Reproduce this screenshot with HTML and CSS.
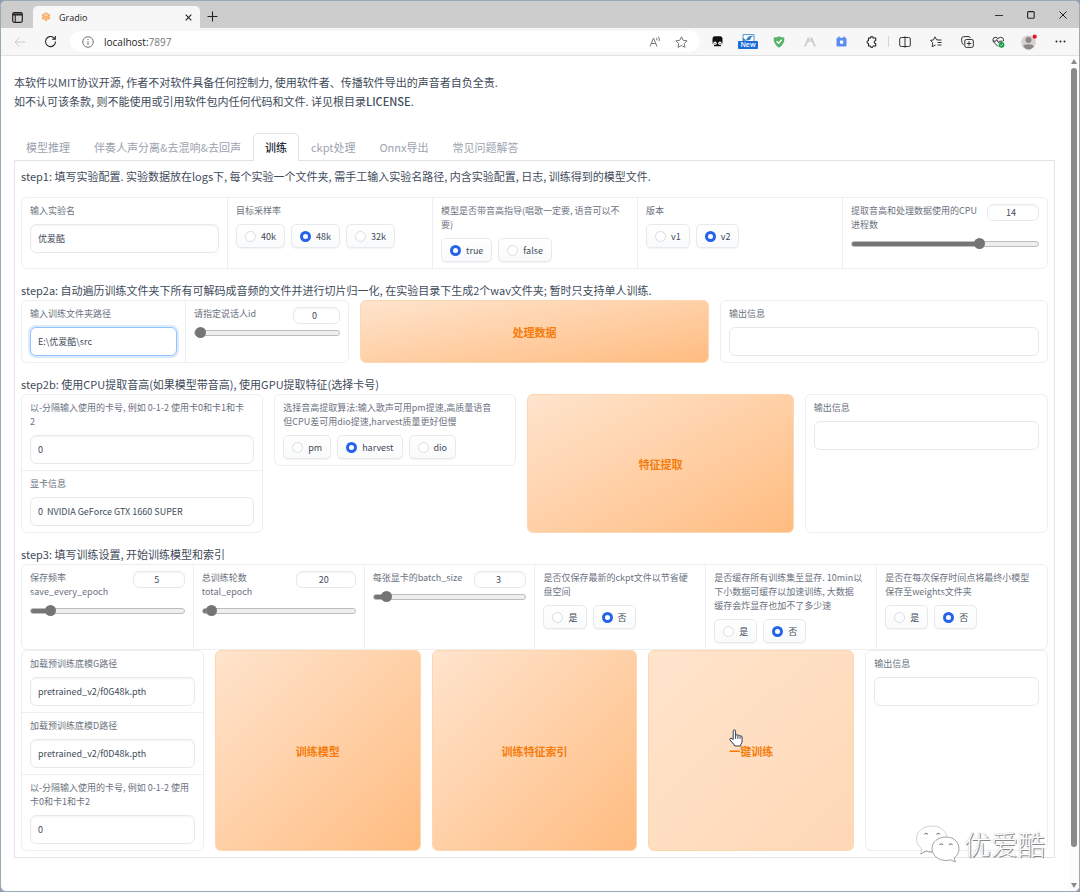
FILE: index.html
```html
<!DOCTYPE html>
<html lang="zh-CN">
<head>
<meta charset="utf-8">
<meta name="viewport" content="width=device-width, initial-scale=1">
<title>Gradio</title>
<link rel="stylesheet" href="styles.css">
</head>
<body>
<div class="window">
  <header class="titlebar">
    <button class="icon-btn workspace" aria-label="标签页操作"><svg width="11" height="11" viewBox="0 0 11 11"><rect x=".7" y=".7" width="9.6" height="9.6" rx="1.5" fill="none" stroke="#222" stroke-width="1.2"/><path d="M1 1.5h9v2H1z" fill="#222"/><path d="M3.3 3v7" stroke="#222"/></svg></button>
    <div class="browser-tab">
      <svg width="10" height="10" viewBox="0 0 10 10"><path d="M5 .8 9 3v4L5 9.2 1 7V3z" fill="#fbd1a2"/><path d="m1 3 4 2.2L9 3M1 5l4 2.2L9 5M1 7l2-1.2M9 7 7 5.8M5 .8 1 3m4-2.2L9 3M5 9.2V7" fill="none" stroke="#f39a45" stroke-width=".8"/></svg>
      <span class="browser-tab-title">Gradio</span>
      <button class="icon-btn" aria-label="关闭标签页"><svg width="7" height="7" viewBox="0 0 7 7"><path d="M.7.7l5.6 5.6M6.3.7L.7 6.300" stroke="#222" stroke-width="1.1"/></svg></button>
    </div>
    <button class="icon-btn new-tab" aria-label="新建标签页"><svg width="11" height="11" viewBox="0 0 11 11"><path d="M5.500 0.500v10M.5 5.500h10" stroke="#222" stroke-width="1.100"/></svg></button>
    <div class="window-controls">
      <button class="icon-btn" aria-label="最小化"><svg width="8" height="8" viewBox="0 0 8 8"><path d="M0 4.500h8" stroke="#333"/></svg></button>
      <button class="icon-btn" aria-label="最大化"><svg width="8" height="8" viewBox="0 0 8 8"><rect x=".6" y=".6" width="6.600" height="6.600" rx="1" fill="none" stroke="#222" stroke-width="1.100"/></svg></button>
      <button class="icon-btn" aria-label="关闭"><svg width="8" height="8" viewBox="0 0 8 8"><path d="m.5.5 7 7m0-7-7 7" stroke="#222" stroke-width="1"/></svg></button>
    </div>
  </header>

  <nav class="toolbar" aria-label="浏览器工具栏">
    <button class="icon-btn nav-btn" aria-label="返回"><svg width="12" height="10" viewBox="0 0 12 10"><path d="M11.500 5H1m4.500-4.500L1 5l4.500 4.500" fill="none" stroke="#ccc"/></svg></button>
    <button class="icon-btn nav-btn" aria-label="刷新"><svg width="13" height="13" viewBox="0 0 13 13"><path d="M11.500 6.500a5 5 0 1 1-1.700-3.700l1.200 1.200M11.300 1v3.200H8.100" fill="none" stroke="#222" stroke-width="1.100"/></svg></button>
    <div class="address">
      <svg width="12" height="12" viewBox="0 0 12 12"><circle cx="6" cy="6" r="5.300" fill="none" stroke="#777"/><path d="M6 5.300v3.400" stroke="#777" stroke-width="1.100"/><circle cx="6" cy="3.600" r=".7" fill="#777"/></svg>
      <span class="url">localhost:<span class="port">7897</span></span>
      <button class="icon-btn addr-btn" aria-label="大声朗读"><svg width="12" height="12" viewBox="0 0 12 12"><path d="M1 10.500 4.500 2 8 10.500M2.200 7.500h4.600M7.200 1.800q1 1 .7 2.600M9.300.6q1.600 1.800.9 4.400" fill="none" stroke="#777"/></svg></button>
      <button class="icon-btn addr-btn" aria-label="收藏"><svg width="13" height="12" viewBox="0 0 13 12"><path d="m6.500.8 1.700 3.500 3.900.5-2.800 2.700.7 3.800-3.500-1.800L3 11.300l.7-3.800L.9 4.800l3.900-.5z" fill="none" stroke="#777" stroke-linejoin="round"/></svg></button>
    </div>
    <div class="extensions">
      <button class="icon-btn" aria-label="脚本管理器"><svg width="11" height="11" viewBox="0 0 11 11"><path d="M2.500.3h6q2 0 2 2.500v4q0 1.700-1.500 1.700v1.700H2V8.500Q.5 8.500.5 6.800v-4Q.5.3 2.500.3z" fill="#111"/><circle cx="3" cy="7.300" r="1.700" fill="#fff"/><circle cx="8" cy="7.300" r="1.700" fill="#fff"/><circle cx="3" cy="7.500" r=".6" fill="#111"/><circle cx="8" cy="7.500" r=".6" fill="#111"/></svg></button>
      <button class="icon-btn ext-new" aria-label="新扩展"><svg width="13" height="7" viewBox="0 0 13 7"><path d="M1 7V.6h11V7" fill="#fff" stroke="#4e93d1"/><path d="M1 7V4l3 2 2-3q3-2 6-1-3 0-4 4z" fill="#347fc0"/></svg><span class="ext-badge">New</span></button>
      <button class="icon-btn" aria-label="安全防护"><svg width="12" height="12" viewBox="0 0 12 12"><path d="M.7 1.500Q4 1.500 6 .3q2 1.200 5.300 1.200Q12 8 6 11.700 0 8 .7 1.500z" fill="#56b368"/><path d="m3.500 5.300 2 2 3.300-3.500" fill="none" stroke="#fff" stroke-width="1.300"/></svg></button>
      <button class="icon-btn" aria-label="扩展"><svg width="12" height="10" viewBox="0 0 12 10"><path d="M1 9.500 4.600.8V5M11 9.500 7.400.8V5" fill="none" stroke="#ccc" stroke-width="1.800"/></svg></button>
      <button class="icon-btn" aria-label="视频扩展"><svg width="11" height="11" viewBox="0 0 11 11"><rect x=".5" y="1.800" width="10" height="8.700" rx="1" fill="#5b8df0"/><path d="M3 .5v2M8 .5v2" stroke="#5b8df0" stroke-width="1.500"/><rect x="4" y="4.500" width="3.200" height="3.200" rx=".8" fill="#fff"/></svg></button>
      <button class="icon-btn" aria-label="扩展管理"><svg width="12" height="12" viewBox="0 0 12 12"><path d="M2.500 2h2q0-1.400 1.300-1.400T7.100 2h2.600v2.500q-1.500.2-1.500 1.500t1.500 1.500V10H7.100q0 1.400-1.300 1.400T4.500 10h-2V7.500Q1 7.300 1 6t1.500-1.500z" fill="none" stroke="#222" stroke-width="1.100" stroke-linejoin="round"/></svg></button>
      <span class="tool-divider"></span>
      <button class="icon-btn" aria-label="分屏"><svg width="12" height="12" viewBox="0 0 12 12"><path d="M4.500 1.500h-2Q.7 1.500.7 3v6q0 1.500 1.800 1.500h2M7.500 1.500h2q1.800 0 1.800 1.500v6q0 1.500-1.800 1.500h-2M6 .3v11.400M4 1.500h4M4 10.500h4" fill="none" stroke="#333"/></svg></button>
      <button class="icon-btn" aria-label="收藏夹"><svg width="12" height="12" viewBox="0 0 12 12"><path d="M7.800 3.800H6.600L5 .9 3.500 3.900l-3 .5L2.700 6.700 2.200 10.700 5.500 9M7.500 4h4M7.500 6.500h4M7.500 9h4" fill="none" stroke="#333" stroke-linejoin="round"/></svg></button>
      <button class="icon-btn" aria-label="集锦"><svg width="13" height="12" viewBox="0 0 13 12"><rect x="3.800" y="3.500" width="8.500" height="7.900" rx="1.500" fill="none" stroke="#333"/><path d="M2.800 8.500Q1 8 .9 6.500L.6 3Q.5.8 2.500.7L7 .5q2 0 2.300 1.600M8 5.200V9.700M5.800 7.500h4.500" fill="none" stroke="#333"/></svg></button>
      <button class="icon-btn" aria-label="浏览器概要"><svg width="13" height="12" viewBox="0 0 13 12"><path d="M6 10.500 1.700 6Q0 3.700 1.700 1.900 4 .3 6 2.500 8.500.2 10.800 2q1.200 1.500.5 3.300M.8 5.200h3l1-1.700 1.700 3.300 1-1.600h3" fill="none" stroke="#333"/><circle cx="9.500" cy="8.800" r="2.900" fill="#159947"/><path d="m8.200 8.800 1 1 1.700-1.800" fill="none" stroke="#fff" stroke-width=".8"/></svg></button>
      <button class="icon-btn" aria-label="个人资料"><svg width="17" height="16" viewBox="0 0 17 16"><circle cx="7.500" cy="8.500" r="7.300" fill="#d6d2cf"/><circle cx="7.500" cy="6" r="3" fill="#8b8785"/><path d="M2.300 12.500Q3 10.300 7.500 10.300t5.200 2.200Q10.500 15.500 7.500 15.500T2.300 12.500z" fill="#8b8785"/><circle cx="13.700" cy="2.700" r="2.100" fill="#e81123"/></svg></button>
      <button class="icon-btn" aria-label="设置及其他"><svg width="11" height="3" viewBox="0 0 11 3"><circle cx="1.500" cy="1.500" r="1" fill="#222"/><circle cx="5.500" cy="1.500" r="1" fill="#222"/><circle cx="9.500" cy="1.500" r="1" fill="#222"/></svg></button>
    </div>
  </nav>

  <div class="viewport">
    <main class="page">
      <div class="intro">
        <p>本软件以MIT协议开源, 作者不对软件具备任何控制力, 使用软件者、传播软件导出的声音者自负全责.</p>
        <p>如不认可该条款, 则不能使用或引用软件包内任何代码和文件. 详见根目录<strong>LICENSE</strong>.</p>
      </div>

      <div class="tabs" role="tablist">
        <button class="tab" role="tab">模型推理</button>
        <button class="tab" role="tab">伴奏人声分离&amp;去混响&amp;去回声</button>
        <button class="tab selected" role="tab" aria-selected="true">训练</button>
        <button class="tab" role="tab">ckpt处理</button>
        <button class="tab" role="tab">Onnx导出</button>
        <button class="tab" role="tab">常见问题解答</button>
      </div>

      <div class="panel" role="tabpanel">
        <section class="step step-first">
          <p class="step-title">step1: 填写实验配置. 实验数据放在logs下, 每个实验一个文件夹, 需手工输入实验名路径, 内含实验配置, 日志, 训练得到的模型文件.</p>
          <div class="group cols">
            <div class="cell">
              <label class="label" for="exp">输入实验名</label>
              <input class="text" id="exp" type="text" value="优爱酷">
            </div>
            <div class="cell">
              <fieldset><legend class="label">目标采样率</legend>
                <div class="chips">
                  <label class="chip"><input type="radio" name="sr">40k</label>
                  <label class="chip"><input type="radio" name="sr" checked>48k</label>
                  <label class="chip"><input type="radio" name="sr">32k</label>
                </div>
              </fieldset>
            </div>
            <div class="cell">
              <fieldset><legend class="label">模型是否带音高指导(唱歌一定要, 语音可以不<br>要)</legend>
                <div class="chips">
                  <label class="chip"><input type="radio" name="f0" checked>true</label>
                  <label class="chip"><input type="radio" name="f0">false</label>
                </div>
              </fieldset>
            </div>
            <div class="cell">
              <fieldset><legend class="label">版本</legend>
                <div class="chips">
                  <label class="chip"><input type="radio" name="ver">v1</label>
                  <label class="chip"><input type="radio" name="ver" checked>v2</label>
                </div>
              </fieldset>
            </div>
            <div class="cell">
              <div class="slider-head">
                <label class="label" for="cpu">提取音高和处理数据使用的CPU<br>进程数</label>
                <input class="number" type="number" value="14" aria-label="进程数">
              </div>
              <input class="slider" id="cpu" type="range" min="0" max="20" value="14" style="--fill:70%">
            </div>
          </div>
        </section>

        <section class="step">
          <p class="step-title">step2a: 自动遍历训练文件夹下所有可解码成音频的文件并进行切片归一化, 在实验目录下生成2个wav文件夹; 暂时只支持单人训练.</p>
          <div class="row row-three">
            <div class="group cols">
              <div class="cell">
                <label class="label" for="dir">输入训练文件夹路径</label>
                <input class="text focused" id="dir" type="text" value="E:\优爱酷\src">
              </div>
              <div class="cell">
                <div class="slider-head">
                  <label class="label" for="spk">请指定说话人id</label>
                  <input class="number narrow" type="number" value="0" aria-label="说话人id">
                </div>
                <input class="slider" id="spk" type="range" min="0" max="4" value="0" style="--fill:0%">
              </div>
            </div>
            <button class="primary">处理数据</button>
            <div class="group">
              <div class="cell">
                <label class="label" for="out1">输出信息</label>
                <input class="text" id="out1" type="text" readonly>
              </div>
            </div>
          </div>
        </section>

        <section class="step">
          <p class="step-title">step2b: 使用CPU提取音高(如果模型带音高), 使用GPU提取特征(选择卡号)</p>
          <div class="row row-four">
            <div class="group">
              <div class="cell">
                <label class="label" for="gpu">以-分隔输入使用的卡号, 例如 0-1-2 使用卡0和卡1和卡<br>2</label>
                <input class="text" id="gpu" type="text" value="0">
              </div>
              <div class="cell">
                <label class="label" for="gpuinfo">显卡信息</label>
                <input class="text" id="gpuinfo" type="text" value="0  NVIDIA GeForce GTX 1660 SUPER" readonly>
              </div>
            </div>
            <div class="group hug">
              <div class="cell">
                <fieldset><legend class="label">选择音高提取算法:输入歌声可用pm提速,高质量语音<br>但CPU差可用dio提速,harvest质量更好但慢</legend>
                  <div class="chips">
                    <label class="chip"><input type="radio" name="alg">pm</label>
                    <label class="chip"><input type="radio" name="alg" checked>harvest</label>
                    <label class="chip"><input type="radio" name="alg">dio</label>
                  </div>
                </fieldset>
              </div>
            </div>
            <button class="primary">特征提取</button>
            <div class="group">
              <div class="cell">
                <label class="label" for="out2">输出信息</label>
                <input class="text" id="out2" type="text" readonly>
              </div>
            </div>
          </div>
        </section>

        <section class="step">
          <p class="step-title">step3: 填写训练设置, 开始训练模型和索引</p>
          <div class="group cols">
            <div class="cell">
              <div class="slider-head">
                <label class="label" for="save">保存频率<br>save_every_epoch</label>
                <input class="number" type="number" value="5" aria-label="保存频率">
              </div>
              <input class="slider" id="save" type="range" min="0" max="50" value="5" style="--fill:10%">
            </div>
            <div class="cell">
              <div class="slider-head">
                <label class="label" for="total">总训练轮数<br>total_epoch</label>
                <input class="number wide" type="number" value="20" aria-label="总训练轮数">
              </div>
              <input class="slider" id="total" type="range" min="0" max="1000" value="20" style="--fill:2%">
            </div>
            <div class="cell">
              <div class="slider-head">
                <label class="label" for="batch">每张显卡的batch_size</label>
                <input class="number" type="number" value="3" aria-label="batch_size">
              </div>
              <input class="slider" id="batch" type="range" min="1" max="40" value="3" style="--fill:5%">
            </div>
            <div class="cell">
              <fieldset><legend class="label">是否仅保存最新的ckpt文件以节省硬<br>盘空间</legend>
                <div class="chips">
                  <label class="chip"><input type="radio" name="latest">是</label>
                  <label class="chip"><input type="radio" name="latest" checked>否</label>
                </div>
              </fieldset>
            </div>
            <div class="cell">
              <fieldset><legend class="label">是否缓存所有训练集至显存. 10min以<br>下小数据可缓存以加速训练, 大数据<br>缓存会炸显存也加不了多少速</legend>
                <div class="chips">
                  <label class="chip"><input type="radio" name="cache">是</label>
                  <label class="chip"><input type="radio" name="cache" checked>否</label>
                </div>
              </fieldset>
            </div>
            <div class="cell">
              <fieldset><legend class="label">是否在每次保存时间点将最终小模型<br>保存至weights文件夹</legend>
                <div class="chips">
                  <label class="chip"><input type="radio" name="weights">是</label>
                  <label class="chip"><input type="radio" name="weights" checked>否</label>
                </div>
              </fieldset>
            </div>
          </div>
          <div class="row row-five">
            <div class="group">
              <div class="cell">
                <label class="label" for="pg">加载预训练底模G路径</label>
                <input class="text" id="pg" type="text" value="pretrained_v2/f0G48k.pth">
              </div>
              <div class="cell">
                <label class="label" for="pd">加载预训练底模D路径</label>
                <input class="text" id="pd" type="text" value="pretrained_v2/f0D48k.pth">
              </div>
              <div class="cell">
                <label class="label" for="gpu2">以-分隔输入使用的卡号, 例如 0-1-2 使用<br>卡0和卡1和卡2</label>
                <input class="text" id="gpu2" type="text" value="0">
              </div>
            </div>
            <button class="primary">训练模型</button>
            <button class="primary">训练特征索引</button>
            <button class="primary hovered">一键训练
              <svg class="pointer" width="14" height="18" viewBox="0 0 14 18"><path d="M4.200 10.500V2.200Q4.200.8 5.400.8t1.200 1.400v4.500q.2-1 1.100-1t1.200 1.100q.3-.8 1.100-.7t1.100 1.200q.3-.6 1-.5t1 1.200v4q0 2-1.200 3.200L11.500 17H5.800L4.500 15 1 11q-.6-1 .2-1.600t1.900.3z" fill="#fff" stroke="#333a48" stroke-width="1" stroke-linejoin="round"/><path d="M6.600 6.500v3.300M8.900 7v2.800M11.100 7.500v2.300" stroke="#333a48"/></svg>
            </button>
            <div class="group">
              <div class="cell">
                <label class="label" for="out3">输出信息</label>
                <input class="text" id="out3" type="text" readonly>
              </div>
            </div>
          </div>
        </section>
      </div>
    </main>
    <div class="scrollbar" aria-hidden="true">
      <span class="arrow-up"></span>
      <span class="thumb"></span>
      <span class="arrow-down"></span>
    </div>
  </div>

  <div class="watermark">
    <svg width="46" height="38" viewBox="0 0 46 38"><g fill="#fff" stroke="#999" stroke-width=".9" stroke-linejoin="round"><path d="M17 1C8 1 1.500 6.500 1.500 14c0 4 2 7.500 5.500 10l-1.500 5 5.500-3q3 1 6 1c8.500 0 15-5.500 15-13S25.500 1 17 1z" stroke="#ccc"/><path d="m5.500 29 5.500-3q3 1 6 1" fill="none"/><path d="M31 12c-8 0-14 5-14 11.500S23 35.500 31 35.500q2.500 0 4.500-.7l5 2.200-1.300-4q4.800-3.500 4.800-9.500C44 17 38.500 12 31 12z"/></g><g fill="none" stroke="#777" stroke-width="1.200"><path d="M9.500 9.500q1.700-2.500 3.500 0M21.500 9.500q1.700-2.500 3.500 0M24.500 20q1.700-2.500 3.500 0M34 20q1.700-2.500 3.500 0"/></g></svg>
    <span>优爱酷</span>
  </div>
</div>
</body>
</html>
```
FILE: styles.css
```css
* { box-sizing: border-box; }

body {
  margin: 0;
  background: #8d9cb0;
  font-family: "Noto Sans CJK SC", sans-serif;
  font-size: 11px;
  color: #414b5a;
}

button, input { font: inherit; color: inherit; }
p { margin: 0; }
svg { display: block; flex: none; }

.window {
  position: relative;
  display: flex;
  flex-direction: column;
  min-height: 100vh;
  border: 1px solid #9aa9b6;
  border-radius: 6px;
  overflow: hidden;
  background: #fff;
}

/* Browser chrome */

.icon-btn {
  display: flex;
  align-items: center;
  justify-content: center;
  padding: 0;
  border: 0;
  background: none;
}

.titlebar {
  display: flex;
  align-items: stretch;
  height: 27px;
  background: #cdcdcd;
}

.workspace { width: 32px; padding-top: 5px; }

.browser-tab {
  display: flex;
  align-items: center;
  gap: 8px;
  width: 167px;
  margin-top: 5px;
  padding: 0 8px;
  border-radius: 5px 5px 0 0;
  background: #f7f7f7;
  font-family: "Open Sans", sans-serif;
  font-size: 9px;
  color: #222;
}

.browser-tab-title { flex: 1; }

.new-tab { width: 24px; padding-top: 4px; }

.window-controls { display: flex; margin-left: auto; }
.window-controls .icon-btn { width: 32px; }

.toolbar {
  display: flex;
  align-items: center;
  height: 28px;
  padding: 0 4px;
  border-bottom: 1px solid #e2e2e2;
  background: #f7f7f7;
}

.nav-btn { width: 30px; }

.address {
  display: flex;
  flex: 1;
  align-items: center;
  gap: 10px;
  height: 21px;
  margin: 0 2px 0 5px;
  padding: 0 10px 0 12px;
  border-radius: 11px;
  background: #fff;
}

.url {
  flex: 1;
  font-family: "Open Sans", sans-serif;
  font-size: 10px;
  color: #222;
}

.port { color: #777; }
.addr-btn { width: 17px; }

.extensions { display: flex; align-items: center; gap: 1px; }
.extensions .icon-btn { width: 30px; height: 20px; }

.tool-divider { width: 1px; height: 11px; background: #d5d5d5; }

.extensions .ext-new { flex-direction: column; }

.ext-badge {
  padding: 0 2px;
  border-radius: 1px;
  background: #1a6bd8;
  color: #fff;
  font-family: "Open Sans", sans-serif;
  font-size: 7px;
  font-weight: 600;
  line-height: 8px;
}

/* Page */

.viewport { display: flex; flex: 1; }

.page { flex: 1; padding: 17px 14px 30px 13px; }

.scrollbar {
  display: flex;
  flex-direction: column;
  align-items: center;
  width: 10px;
  padding: 3px 0;
  background: #fcfcfc;
}

.arrow-up, .arrow-down {
  border: 3px solid transparent;
}

.arrow-up { border-bottom: 5px solid #8a8a8a; border-top: 0; }
.arrow-down { margin-top: auto; border-top: 5px solid #8a8a8a; border-bottom: 0; }

.thumb {
  width: 6px;
  height: 94%;
  margin-top: 4px;
  border-radius: 3px;
  background: #8a8a8a;
}

.intro { line-height: 19px; }
.intro strong { font-weight: 500; }

.tabs {
  display: flex;
  margin-top: 22px;
  position: relative;
}

.tab {
  height: 28px;
  padding: 0 11px 2px;
  border: 1px solid transparent;
  border-bottom: 0;
  background: none;
  color: #9ca3af;
  white-space: nowrap;
}

.tab.selected {
  border-color: #e2e4e9;
  border-radius: 5px 5px 0 0;
  background: #fff;
  color: #1f2937;
  font-weight: 500;
}

.panel {
  margin-top: -1px;
  padding: 5px 6px 6px;
  border: 1px solid #e2e4e9;
}

.step + .step { margin-top: 11px; }
.step-title { line-height: 20px; }
.step-first .step-title { padding-bottom: 11px; }

.row { display: grid; gap: 11px; }
.row-three { grid-template-columns: 328fr 349fr 328fr; }
.row-four { grid-template-columns: 242fr 242fr 266fr 243fr; }
.row-five { grid-template-columns: 183fr 206fr 206fr 206fr 183fr; }

.group {
  min-width: 0;
  border: 1px solid #eceef1;
  border-radius: 6px;
}

.hug { align-self: start; }

.cols {
  display: grid;
  grid-auto-flow: column;
  grid-auto-columns: minmax(0, 1fr);
}

.cell { padding: 6px 8px; }
.cell + .cell { border-top: 1px solid #eceef1; }
.cols > .cell + .cell { border-top: 0; border-left: 1px solid #eceef1; }

fieldset { min-width: 0; margin: 0; padding: 0; border: 0; }

.label {
  display: block;
  margin-bottom: 6px;
  padding: 0;
  color: #6b7280;
  font-size: 9px;
  line-height: 14px;
  white-space: nowrap;
}

.text, .number {
  border: 1px solid #e7e9ed;
  border-radius: 6px;
  background: #fff;
  box-shadow: inset 0 1px 2px rgba(0, 0, 0, 0.05);
  outline: 0;
}

.text {
  display: block;
  width: 100%;
  height: 29px;
  padding: 0 7px;
  font-size: 9px;
}

.text[readonly] { box-shadow: none; }

.text.focused {
  border-color: #93c5fd;
  box-shadow: 0 0 0 2px #dbeafe;
}

.chips { display: flex; gap: 6px; }

.chip {
  display: flex;
  align-items: center;
  gap: 5px;
  height: 24px;
  padding: 0 8px;
  border: 1px solid #e7e9ed;
  border-radius: 5px;
  background: linear-gradient(to top, #f9fafb, #fff);
  box-shadow: 0 1px 1px rgba(0, 0, 0, 0.05);
  font-size: 9px;
}

.chip input {
  appearance: none;
  width: 11px;
  height: 11px;
  margin: 0;
  border: 1px solid #d9dce1;
  border-radius: 50%;
  background: #fff;
}

.chip input:checked { border: 3px solid #2563eb; }

.slider-head {
  display: flex;
  justify-content: space-between;
  align-items: flex-start;
}

.number {
  width: 52px;
  height: 17px;
  margin-bottom: -3px;
  padding: 0 10px 0 6px;
  font-size: 9px;
  text-align: center;
}

.number::-webkit-inner-spin-button { appearance: none; margin: 0; }

.number.narrow { width: 47px; }
.number.wide { width: 60px; }

.slider {
  appearance: none;
  display: block;
  width: 100%;
  height: 11px;
  margin: 0;
  background: none;
}

.slider::-webkit-slider-runnable-track {
  height: 6px;
  border: 1px solid #bdbdbd;
  border-radius: 3px;
  background: linear-gradient(to right, #757575 var(--fill), #efefef var(--fill));
}

.slider::-webkit-slider-thumb {
  appearance: none;
  width: 11px;
  height: 11px;
  margin-top: -4px;
  border-radius: 50%;
  background: #757575;
}

.primary {
  position: relative;
  padding: 0;
  border: 1px solid #fed7b0;
  border-radius: 6px;
  background: linear-gradient(to bottom right, #ffe4cd, #ffbc80);
  color: #f57c0c;
  font-weight: 700;
}

.primary.hovered { background: linear-gradient(to bottom right, #ffe4cc, #ffd8b6); }

.pointer { position: absolute; left: 39%; top: 39%; }

.watermark {
  position: absolute;
  right: 34px;
  bottom: 28px;
  display: flex;
  align-items: center;
  gap: 3px;
  color: #fff;
  font-size: 27px;
  font-weight: 300;
  line-height: 38px;
  text-shadow: 1px 1px 0 #888, 0 0 1px #aaa;
}
```
